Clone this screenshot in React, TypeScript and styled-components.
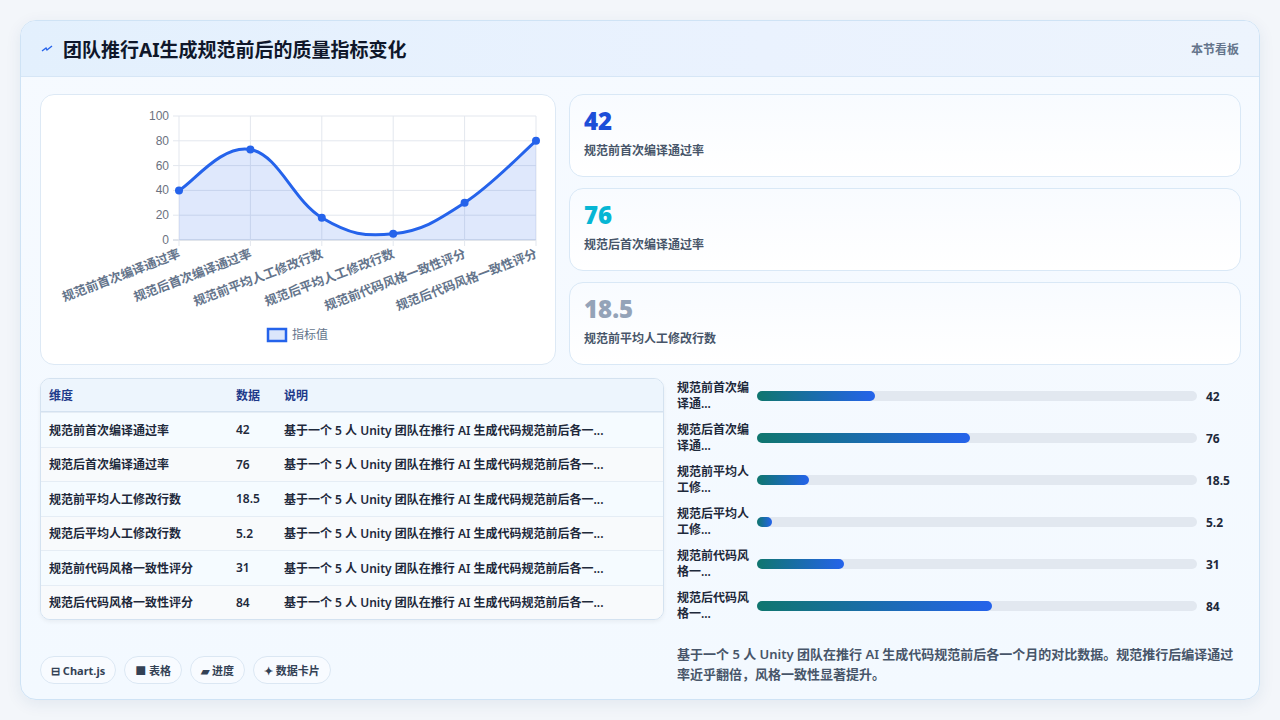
import React from "react";
import styled, { createGlobalStyle } from "styled-components";

const Global = createGlobalStyle`
  html, body { margin: 0; padding: 0; background: #f3f6fa; }
  body { font-family: "Noto Sans", "Noto Sans CJK SC", sans-serif; width: 1280px; height: 720px; overflow: hidden; }
  * { box-sizing: border-box; }
`;

const Page = styled.div`
  padding: 20px;
  height: 720px;
`;
const Card = styled.div`
  height: 680px;
  border: 1px solid #cfe3f5;
  border-radius: 16px;
  background: linear-gradient(180deg, #f6faff 0%, #f3f9ff 100%);
  box-shadow: 0 4px 16px rgba(30, 64, 120, 0.08);
  overflow: hidden;
  display: flex;
  flex-direction: column;
`;
const Header = styled.div`
  height: 56px;
  flex: none;
  display: flex;
  align-items: center;
  justify-content: space-between;
  padding: 0 20px;
  background: linear-gradient(90deg, #e3f0fd 0%, #eaf2fe 60%, #edf4fd 100%);
  border-bottom: 1px solid #d6e6f6;
`;
const Title = styled.h1`
  margin: 0;
  font-size: 19px;
  font-weight: 700;
  color: #0f172a;
  display: flex;
  align-items: center;
  gap: 10px;
`;
const Side = styled.span`
  font-size: 12px;
  font-weight: 600;
  color: #64748b;
`;
const Body = styled.div`
  flex: 1;
  padding: 17px 18px 18px 19px;
  display: flex;
  flex-direction: column;
  gap: 15px;
`;
const TopRow = styled.div`
  display: grid;
  grid-template-columns: 516px 1fr;
  column-gap: 13px;
  height: 269px;
`;
const BottomRow = styled.div`
  flex: 1;
  display: grid;
  grid-template-columns: 624px 1fr;
  column-gap: 13px;
`;
const ChartCard = styled.div`
  background: #fff;
  border: 1px solid #dde9f5;
  border-radius: 14px;
`;
const Stats = styled.div`
  display: flex;
  flex-direction: column;
  gap: 11px;
`;
const Stat = styled.div`
  flex: 1;
  border: 1px solid #d9e8f6;
  border-radius: 14px;
  background: linear-gradient(180deg, #f8fbff, #ffffff);
  padding: 10px 14px;
`;
const StatValue = styled.div<{ $c: string }>`
  font-family: "Open Sans", sans-serif;
  font-weight: 800;
  font-size: 24px;
  line-height: 32px;
  color: ${(p) => p.$c};
`;
const StatLabel = styled.div`
  font-size: 12px;
  font-weight: 600;
  color: #475569;
  margin-top: 4px;
`;
const LeftBottom = styled.div`
  display: flex;
  flex-direction: column;
  justify-content: space-between;
`;
const Table = styled.table`
  width: 624px;
  border-collapse: separate;
  border-spacing: 0;
  border: 1px solid #d4e2f0;
  border-radius: 10px;
  overflow: hidden;
  font-size: 12px;
  font-weight: 600;
  color: #1e293b;
  box-shadow: 0 2px 4px rgba(0,0,0,0.05);
`;
const Th = styled.th<{ $w?: number }>`
  text-align: left;
  background: #edf5fd;
  color: #1e3a8a;
  height: 33px;
  padding: 0 8px;
  font-weight: 700;
  width: ${(p) => (p.$w ? `${p.$w}px` : "auto")};
  border-bottom: 1px solid #d4e2f0;
`;
const Td = styled.td<{ $alt: boolean }>`
  height: 34.5px;
  padding: 0 8px;
  white-space: nowrap;
  background: ${(p) => (p.$alt ? "#f8fafc" : "#f5fbff")};
  border-top: 1px solid #e5edf5;
`;
const Chips = styled.div`
  display: flex;
  gap: 8px;
`;
const Chip = styled.span`
  height: 28px;
  padding: 0 10px;
  border: 1px solid #dbe7f3;
  border-radius: 14px;
  background: #f8fbff;
  display: inline-flex;
  align-items: center;
  gap: 4px;
  font-size: 11px;
  font-weight: 700;
  color: #334155;
`;
const Right = styled.div`
  display: flex;
  flex-direction: column;
`;
const BarList = styled.div`
  display: flex;
  flex-direction: column;
  gap: 6px;
`;
const BarRow = styled.div`
  display: grid;
  grid-template-columns: 80px 440px 1fr;
  align-items: center;
  height: 36px;
`;
const BarLabel = styled.div`
  font-size: 12px;
  font-weight: 600;
  line-height: 16px;
  color: #1e293b;
  width: 74px;
`;
const Track = styled.div`
  height: 10px;
  border-radius: 5px;
  background: #e2e8f0;
`;
const Fill = styled.div`
  height: 10px;
  border-radius: 5px;
  background: linear-gradient(90deg, #0f766e, #2563eb);
`;
const BarValue = styled.div`
  padding-left: 9px;
  font-size: 12px;
  font-weight: 700;
  color: #1e293b;
`;
const Desc = styled.p`
  margin: 20px 0 0 0;
  font-size: 13px;
  font-weight: 600;
  line-height: 20px;
  color: #475569;
  max-width: 560px;
`;

const rows = [
  ["规范前首次编译通过率", "42", "规范前首次编\n译通..."],
  ["规范后首次编译通过率", "76", "规范后首次编\n译通..."],
  ["规范前平均人工修改行数", "18.5", "规范前平均人\n工修..."],
  ["规范后平均人工修改行数", "5.2", "规范后平均人\n工修..."],
  ["规范前代码风格一致性评分", "31", "规范前代码风\n格一..."],
  ["规范后代码风格一致性评分", "84", "规范后代码风\n格一..."],
];
const desc = "基于一个 5 人 Unity 团队在推行 AI 生成代码规范前后各一...";

const Chart = () => {
  const x0 = 138, x1 = 495, yTop = 21, yBot = 145;
  const vals = [40, 73, 18, 5, 30, 80];
  const pts = vals.map((v, i) => [x0 + (i * (x1 - x0)) / 5, yBot - (v / 100) * (yBot - yTop)]);
  let d = `M${pts[0][0]},${pts[0][1]}`;
  for (let i = 0; i < pts.length - 1; i++) {
    const p0 = pts[i - 1] || pts[i], p1 = pts[i], p2 = pts[i + 1], p3 = pts[i + 2] || p2;
    const t = 0.2;
    const c1 = [p1[0] + (p2[0] - p0[0]) * t, p1[1] + (p2[1] - p0[1]) * t];
    const c2 = [p2[0] - (p3[0] - p1[0]) * t, p2[1] - (p3[1] - p1[1]) * t];
    d += ` C${c1[0]},${c1[1]} ${c2[0]},${c2[1]} ${p2[0]},${p2[1]}`;
  }
  return (
    <svg width="516" height="269" style={{ display: "block" }}>
      {[0, 20, 40, 60, 80, 100].map((v) => {
        const y = yBot - (v / 100) * (yBot - yTop);
        return (
          <g key={v}>
            <line x1={x0 - 6} x2={x1} y1={y} y2={y} stroke={v === 0 ? "#c3cbd8" : "#e3e7ee"} />
            <text x={x0 - 10} y={y + 4} textAnchor="end" fontSize="12" fill="#6b7280" fontFamily="Liberation Sans, sans-serif">{v}</text>
          </g>
        );
      })}
      {pts.map((p, i) => (
        <line key={i} x1={p[0]} x2={p[0]} y1={yTop} y2={yBot + 6} stroke="#e3e7ee" />
      ))}
      <path d={`${d} L${x1},${yBot} L${x0},${yBot} Z`} fill="rgba(37,99,235,0.15)" />
      <path d={d} fill="none" stroke="#2563eb" strokeWidth="3" />
      {pts.map((p, i) => (
        <circle key={i} cx={p[0]} cy={p[1]} r="4" fill="#2563eb" />
      ))}
      {rows.map((r, i) => (
        <text key={r[0]} transform={`translate(${pts[i][0] + 2},${yBot + 17}) rotate(-21)`} textAnchor="end" fontSize="12.5" fontWeight="700" fill="#64748b" fontFamily="Noto Sans CJK SC, sans-serif">{r[0]}</text>
      ))}
      <rect x="227" y="234" width="18" height="12" fill="#dbe6fb" stroke="#2563eb" strokeWidth="2.5" />
      <text x="251" y="244" fontSize="12" fill="#64748b" fontFamily="Noto Sans CJK SC, sans-serif">指标值</text>
    </svg>
  );
};

export default function App() {
  return (
    <Page>
      <Global />
      <Card>
        <Header>
          <Title>
            <svg width="12" height="10" viewBox="0 0 12 10"><path d="M1 7 L5 4 L6 6 L11 2" stroke="#2563eb" strokeWidth="1.4" fill="none" /></svg>
            团队推行AI生成规范前后的质量指标变化
          </Title>
          <Side>本节看板</Side>
        </Header>
        <Body>
          <TopRow>
            <ChartCard><Chart /></ChartCard>
            <Stats>
              <Stat><StatValue $c="#1d4ed8">42</StatValue><StatLabel>规范前首次编译通过率</StatLabel></Stat>
              <Stat><StatValue $c="#06b6d4">76</StatValue><StatLabel>规范后首次编译通过率</StatLabel></Stat>
              <Stat><StatValue $c="#94a3b8">18.5</StatValue><StatLabel>规范前平均人工修改行数</StatLabel></Stat>
            </Stats>
          </TopRow>
          <BottomRow>
            <LeftBottom>
              <Table>
                <thead>
                  <tr><Th $w={187}>维度</Th><Th $w={48}>数据</Th><Th>说明</Th></tr>
                </thead>
                <tbody>
                  {rows.map((r, i) => (
                    <tr key={r[0]}>
                      <Td $alt={i % 2 === 1}>{r[0]}</Td>
                      <Td $alt={i % 2 === 1}>{r[1]}</Td>
                      <Td $alt={i % 2 === 1}>{desc}</Td>
                    </tr>
                  ))}
                </tbody>
              </Table>
              <Chips>
                <Chip>⊟ Chart.js</Chip>
                <Chip>■ 表格</Chip>
                <Chip>▰ 进度</Chip>
                <Chip>✦ 数据卡片</Chip>
              </Chips>
            </LeftBottom>
            <Right>
              <BarList>
                {rows.map((r) => (
                  <BarRow key={r[0]}>
                    <BarLabel>{r[2].split("\n").map((s) => <div key={s}>{s}</div>)}</BarLabel>
                    <Track><Fill style={{ width: `${(parseFloat(r[1]) / 157) * 100}%` }} /></Track>
                    <BarValue>{r[1]}</BarValue>
                  </BarRow>
                ))}
              </BarList>
              <Desc>基于一个 5 人 Unity 团队在推行 AI 生成代码规范前后各一个月的对比数据。规范推行后编译通过率近乎翻倍，风格一致性显著提升。</Desc>
            </Right>
          </BottomRow>
        </Body>
      </Card>
    </Page>
  );
}
